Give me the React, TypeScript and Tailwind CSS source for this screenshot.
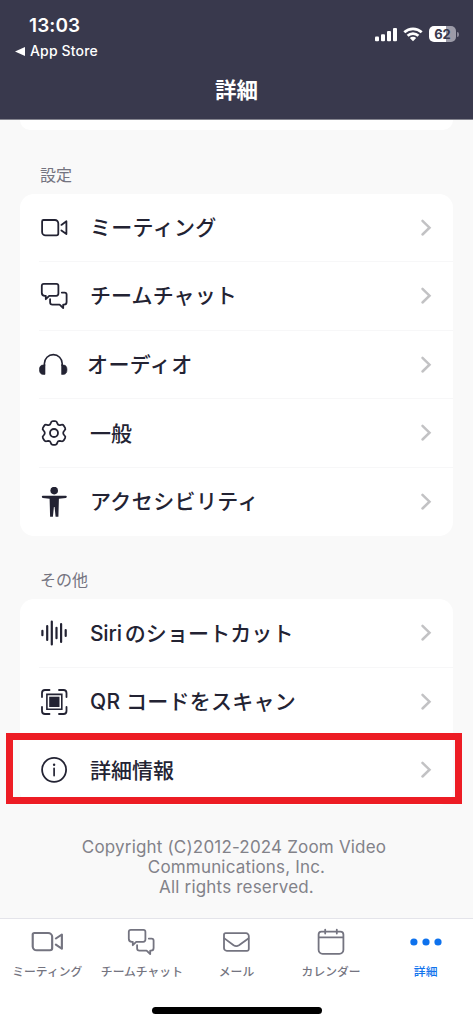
import type { ReactNode } from "react";

type IconProps = { className?: string };

const Svg = ({ children, className = "" }: { children: ReactNode; className?: string }) => (
  <svg
    viewBox="0 0 30 30"
    className={`h-[30px] w-[30px] shrink-0 ${className}`}
    fill="none"
    stroke="currentColor"
    strokeWidth="1.8"
    strokeLinecap="round"
    strokeLinejoin="round"
  >
    {children}
  </svg>
);

const VideoIcon = ({ className }: IconProps) => (
  <Svg className={className}>
    <path d="M4.5 7H15.9A3.4 3.4 0 0 1 19.3 10.4V20.6A1.8 1.8 0 0 1 17.5 22.4H6.5A3.4 3.4 0 0 1 3.1 19V8.4A1.4 1.4 0 0 1 4.5 7Z" />
    <path d="M22.4 11.9L27.4 8.3V21L22.4 17.4" />
  </Svg>
);

const ChatIcon = ({ className }: IconProps) => (
  <Svg className={className}>
    <path d="M4.8 2.8H17.4A2 2 0 0 1 19.4 4.8V12.6A2.2 2.2 0 0 1 17.2 14.8H10.2L6.8 18.2V14.8H5.8A3 3 0 0 1 2.8 11.8V4.8A2 2 0 0 1 4.8 2.8Z" />
    <path d="M22.8 11.6H25.6A2 2 0 0 1 27.6 13.6V21A2.6 2.6 0 0 1 25 23.6H24.2V27L20.6 23.6H13.5A2.4 2.4 0 0 1 11.1 21.2V18.2" />
  </Svg>
);

const HeadphonesIcon = () => (
  <Svg>
    <path d="M5.4 15.5V13.6A8.9 9 0 0 1 23.2 13.6V15.5" strokeWidth="1.6" />
    <path
      d="M6 14.8V24.4H3.9C1.6 24.4.4 22.4.4 19.7S1.6 15 3.9 15ZM22.6 14.8V24.4H24.6C26.9 24.4 28 22.4 28 19.7S26.9 15 24.6 15Z"
      fill="currentColor"
      strokeWidth=".6"
    />
  </Svg>
);

const GearIcon = () => (
  <Svg>
    <circle cx="15" cy="15" r="4" />
    <path d="M11.7 5.2Q12.2 3.1 13.8 3.1H16.2Q17.8 3.1 18.3 5.2Q18.7 6.9 20.2 7.1Q21 7.1 22.2 6.8Q24 6.4 24.8 7.7L26.1 9.9Q26.9 11.3 25.4 12.6Q24.2 13.7 24.2 15T25.4 17.4Q26.9 18.7 26.1 20.1L24.8 22.3Q24 23.6 22.2 23.2Q21 22.9 20.2 22.9Q18.7 23.1 18.3 24.8Q17.8 26.9 16.2 26.9H13.8Q12.2 26.9 11.7 24.8Q11.3 23.1 9.8 22.9Q9 22.9 7.8 23.2Q6 23.6 5.2 22.3L3.9 20.1Q3.1 18.7 4.6 17.4Q5.8 16.3 5.8 15T4.6 12.6Q3.1 11.3 3.9 9.9L5.2 7.7Q6 6.4 7.8 6.8Q9 7.1 9.8 7.1Q11.3 6.9 11.7 5.2Z" />
  </Svg>
);

const AccessibilityIcon = () => (
  <Svg>
    <g fill="currentColor" stroke="none">
      <circle cx="15.2" cy="3.6" r="3.8" />
      <path d="M3.8 8.8H26.8Q27.8 8.8 27.8 9.8T26.8 11L19.9 11.7L19.4 29.7H16.6L15.6 20H14.9L13.9 29.7H11.1L10.6 11.7L3.8 11Q2.8 10.8 2.8 9.8T3.8 8.8Z" />
    </g>
  </Svg>
);

const SiriIcon = () => (
  <Svg>
    <path
      strokeWidth="2.2"
      d="M3.4 12.8V17.2M8.2 8V22M12.8 3.6V26.4M17.5 9.8V20.2M22.1 6V24M26.7 12V18"
    />
  </Svg>
);

const ScanIcon = () => (
  <Svg>
    <path d="M3 10V6A3 3 0 0 1 6 3H10.5M20 3H24.5A3 3 0 0 1 27.5 6V10M27.5 20V24A3 3 0 0 1 24.5 27H20M10.5 27H6A3 3 0 0 1 3 24V20" />
    <path d="M7.9 7.4H22.8V22.3H7.9Z" strokeWidth="1.6" strokeLinejoin="miter" />
    <path d="M10.2 9.7H20.5V20H10.2Z" fill="currentColor" stroke="none" />
  </Svg>
);

const InfoIcon = () => (
  <Svg>
    <circle cx="15.1" cy="14.8" r="12" />
    <path d="M15.1 13.4V20.6" strokeWidth="1.7" />
    <circle cx="15.1" cy="9.8" r="1.2" fill="currentColor" stroke="none" />
  </Svg>
);

const MailIcon = () => (
  <Svg>
    <path d="M4.6 6.2H25A2.8 2.8 0 0 1 27.8 9V22A1.8 1.8 0 0 1 26 23.8H5.8A2.8 2.8 0 0 1 3 21V7.8A1.6 1.6 0 0 1 4.6 6.2Z" />
    <path d="M3.4 11.4L12.6 18.3Q15.3 20.1 18 18.3L27.4 11.4" />
  </Svg>
);

const CalendarIcon = () => (
  <Svg>
    <path d="M5.4 4.6H24.4A3 3 0 0 1 27.4 7.6V22.8A4 4 0 0 1 23.4 26.8H6.6A4 4 0 0 1 2.6 22.8V7.6A3 3 0 0 1 5.4 4.6ZM2.6 10.4H27.4M9.2 2.6V6.5M20.8 2.6V6.5" />
  </Svg>
);

const DotsIcon = () => (
  <Svg className="overflow-visible">
    <g fill="currentColor" stroke="none">
      <circle cx="2.9" cy="15" r="3.6" />
      <circle cx="15" cy="15" r="3.6" />
      <circle cx="27" cy="15" r="3.6" />
    </g>
  </Svg>
);

const Chevron = () => (
  <svg viewBox="0 0 12 20" className="h-5 w-3 shrink-0" fill="none" stroke="#c2c2c4" strokeWidth="2.5">
    <path d="M2.5 2.9L9.5 9.7L2.5 16.5" strokeLinecap="round" />
  </svg>
);

type RowProps = {
  icon: ReactNode;
  label: ReactNode;
  labelClass?: string;
  highlighted?: boolean;
};

const Row = ({ icon, label, labelClass = "", highlighted = false }: RowProps) => (
  <div className="group relative flex h-[68.5px] items-center pl-[19px] pr-[21px]">
    {icon}
    <span className={`ml-[21px] flex-1 whitespace-nowrap text-[21px] font-medium leading-[30px] ${labelClass}`}>
      {label}
    </span>
    <Chevron />
    <div className="absolute bottom-0 left-[19px] right-0 h-px bg-[#f7f7f8] group-last:hidden" />
    {highlighted && (
      <div className="absolute -left-[14px] -right-[9px] -top-[3px] h-[71px] border-[7px] border-[#ed1c24]" />
    )}
  </div>
);

const Card = ({ children }: { children: ReactNode }) => (
  <div className="mx-5 rounded-[14px] bg-white">{children}</div>
);

const SectionTitle = ({ children }: { children: ReactNode }) => (
  <h2 className="pl-10 text-[16px] leading-6 text-[#747480]">{children}</h2>
);

const StatusIcons = () => (
  <div className="flex items-center text-white">
    <svg viewBox="0 0 22 15" className="h-[15px] w-[22px]" fill="currentColor">
      <rect x="0" y="9.6" width="4" height="4.6" rx="1" />
      <rect x="6" y="7.2" width="4" height="7" rx="1" />
      <rect x="12" y="4" width="4" height="10.2" rx="1" />
      <rect x="18" y="1" width="4" height="13.2" rx="1" />
    </svg>
    <svg viewBox="0 0 20 15" className="ml-[6px] h-[15px] w-5" fill="none" stroke="currentColor" strokeWidth="2.7">
      <path d="M1.3 5.3A12.6 12.6 0 0 1 18.7 5.3M4.6 8.8A7.8 7.8 0 0 1 15.4 8.8" />
      <path d="M10 14.3L6.8 11.1A4.5 4.5 0 0 1 13.2 11.1Z" fill="currentColor" stroke="none" />
    </svg>
    <div className="ml-[6px] flex h-4 w-[27px] items-center justify-center rounded-[5px] bg-[linear-gradient(90deg,#fff_62%,#9c9ba8_62%)] text-[13px] font-bold leading-none text-[#39394d]">
      62
    </div>
    <div className="ml-[1px] h-[5px] w-[2px] rounded-r-full bg-[#8b8a99]" />
  </div>
);

const Tab = ({ icon, label, active = false }: { icon: ReactNode; label: string; active?: boolean }) => (
  <div className={`flex flex-1 flex-col items-center ${active ? "text-[#0e72ed]" : "text-[#747480]"}`}>
    {icon}
    <span className="mt-[6px] whitespace-nowrap text-[11.8px] font-medium leading-[18px]">{label}</span>
  </div>
);

export default function App() {
  return (
    <div
      lang="ja"
      className="flex h-[1024px] w-[473px] flex-col overflow-hidden bg-[#f9f9f9] font-[Inter,'Noto_Sans_CJK_JP',sans-serif] text-[#232333]"
    >
      <header className="h-[120px] shrink-0 border-b border-[#85858f] bg-[#39394d] text-white">
        <div className="flex h-[68px] justify-between pl-[15px] pr-[14px] pt-[14px]">
          <div>
            <div className="pl-[14px] text-[19px] font-semibold leading-6 tracking-[0.1px]">13:03</div>
            <div className="flex items-center gap-[5px] text-[14px] font-medium leading-[26px] tracking-[0.15px]">
              <svg viewBox="0 0 10 9" className="h-[9px] w-[10px]" fill="currentColor">
                <path d="M10 0V9L0 4.5Z" />
              </svg>
              App Store
            </div>
          </div>
          <div className="pt-[12px]">
            <StatusIcons />
          </div>
        </div>
        <h1 className="text-center text-[21.5px] font-bold leading-[45px]">詳細</h1>
      </header>

      <main className="flex-1">
        <div className="mx-5 h-[10px] rounded-b-[14px] bg-white" />
        <div className="pt-[33px]">
          <SectionTitle>設定</SectionTitle>
        </div>
        <div className="pt-[6.5px]">
          <Card>
            <Row icon={<VideoIcon />} label="ミーティング" labelClass="tracking-[0.3px]" />
            <Row icon={<ChatIcon />} label="チームチャット" labelClass="tracking-[0.1px]" />
            <Row icon={<HeadphonesIcon />} label="オーディオ" labelClass="-translate-x-[3px] tracking-[0.4px]" />
            <Row icon={<GearIcon />} label="一般" labelClass="translate-y-px" />
            <Row icon={<AccessibilityIcon />} label="アクセシビリティ" labelClass="tracking-[0.4px]" />
          </Card>
        </div>
        <div className="pt-[32px]">
          <SectionTitle>その他</SectionTitle>
        </div>
        <div className="pt-[7px]">
          <Card>
            <Row
              icon={<SiriIcon />}
              label={
                <>
                  <span className="mr-[3px] tracking-[-0.2px]">Siri</span>のショートカット
                </>
              }
              labelClass="translate-y-px tracking-[0.1px]"
            />
            <Row icon={<ScanIcon />} label="QR コードをスキャン" labelClass="tracking-[0.25px]" />
            <Row icon={<InfoIcon />} label="詳細情報" labelClass="translate-y-px" highlighted />
          </Card>
        </div>
        <p className="pt-[32px] text-center text-[17px] leading-[20.3px] tracking-[0.18px] text-[#828289]">
          <span className="mr-[5px]">Copyright (C)2012-2024 Zoom Video</span>
          <br />
          Communications, Inc.
          <br />
          All rights reserved.
        </p>
      </main>

      <footer className="h-[106px] shrink-0 border-t border-[#e4e4ea] bg-white pt-2">
        <nav className="flex h-20">
          <Tab icon={<VideoIcon className="scale-x-[1.2] scale-y-[1.12]" />} label="ミーティング" />
          <Tab icon={<ChatIcon className="-translate-x-px" />} label="チームチャット" />
          <Tab icon={<MailIcon />} label="メール" />
          <Tab icon={<CalendarIcon />} label="カレンダー" />
          <Tab icon={<DotsIcon />} label="詳細" active />
        </nav>
        <div className="mx-auto h-[7px] w-[170px] rounded-full bg-black" />
      </footer>
    </div>
  );
}
